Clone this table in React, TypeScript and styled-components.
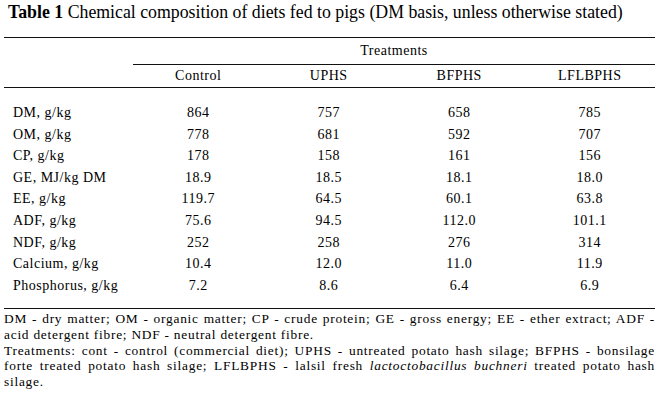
import React from "react";
import styled, { createGlobalStyle } from "styled-components";

const serif = `"Liberation Serif", "Times New Roman", Times, serif`;

const Global = createGlobalStyle`
  html, body { margin: 0; padding: 0; background: #fff; }
  body { font-family: ${serif}; color: #000; }
`;

const Page = styled.div`
  width: 651px;
  padding: 0 6px 0 4px;
  font-family: ${serif};
`;

const Title = styled.div`
  font-family: ${serif};
  font-size: 17.8px;
  line-height: 20px;
  padding: 2px 0 0 4px;
  margin-bottom: 15px;
  white-space: nowrap;
  b { font-weight: bold; }
`;

const Table = styled.table`
  width: 651px;
  border-collapse: separate;
  border-spacing: 0;
  table-layout: fixed;
  border-top: 1px solid #111;
  border-bottom: 1px solid #111;
  font-family: ${serif};
  font-size: 14px;
  letter-spacing: 0.5px;
  color: #000;
`;

const GroupHead = styled.th<{ $rule?: boolean }>`
  font-family: ${serif};
  font-weight: normal;
  text-align: center;
  line-height: 26px;
  padding: 0;
  border-bottom: ${(p) => (p.$rule ? "1px solid #111" : "none")};
`;

const ColHead = styled.th`
  font-family: ${serif};
  font-weight: normal;
  text-align: center;
  line-height: 22px;
  padding: 0;
  border-bottom: 1px solid #111;
`;

const Row = styled.tr`
  &:first-child td { padding-top: 14px; }
  &:last-child td { padding-bottom: 12px; }
`;

const Label = styled.td`
  font-family: ${serif};
  text-align: left;
  padding: 0 0 0 9px;
  line-height: 21.6px;
  white-space: nowrap;
`;

const Value = styled.td`
  font-family: ${serif};
  text-align: center;
  padding: 0;
  line-height: 21.6px;
`;

const Notes = styled.div`
  font-family: ${serif};
  font-size: 13.4px;
  letter-spacing: 0.75px;
  line-height: 15.6px;
  padding-top: 2px;
  text-align: justify;
  p { margin: 0; }
`;

const rows: [string, string, string, string, string][] = [
  ["DM, g/kg", "864", "757", "658", "785"],
  ["OM, g/kg", "778", "681", "592", "707"],
  ["CP, g/kg", "178", "158", "161", "156"],
  ["GE, MJ/kg DM", "18.9", "18.5", "18.1", "18.0"],
  ["EE, g/kg", "119.7", "64.5", "60.1", "63.8"],
  ["ADF, g/kg", "75.6", "94.5", "112.0", "101.1"],
  ["NDF, g/kg", "252", "258", "276", "314"],
  ["Calcium, g/kg", "10.4", "12.0", "11.0", "11.9"],
  ["Phosphorus, g/kg", "7.2", "8.6", "6.4", "6.9"],
];

export default function App() {
  return (
    <Page>
      <Global />
      <Title>
        <b>Table 1</b> Chemical composition of diets fed to pigs (DM basis, unless otherwise stated)
      </Title>
      <Table>
        <colgroup>
          <col style={{ width: 129 }} />
          <col style={{ width: 130.5 }} />
          <col style={{ width: 130.5 }} />
          <col style={{ width: 130.5 }} />
          <col style={{ width: 130.5 }} />
        </colgroup>
        <thead>
          <tr>
            <GroupHead />
            <GroupHead colSpan={4} $rule>
              Treatments
            </GroupHead>
          </tr>
          <tr>
            <ColHead />
            <ColHead>Control</ColHead>
            <ColHead>UPHS</ColHead>
            <ColHead>BFPHS</ColHead>
            <ColHead>LFLBPHS</ColHead>
          </tr>
        </thead>
        <tbody>
          {rows.map((r) => (
            <Row key={r[0]}>
              <Label>{r[0]}</Label>
              <Value>{r[1]}</Value>
              <Value>{r[2]}</Value>
              <Value>{r[3]}</Value>
              <Value>{r[4]}</Value>
            </Row>
          ))}
        </tbody>
      </Table>
      <Notes>
        <p>
          DM - dry matter; OM - organic matter; CP - crude protein; GE - gross energy; EE - ether extract; ADF - acid
          detergent fibre; NDF - neutral detergent fibre.
        </p>
        <p>
          Treatments: cont - control (commercial diet); UPHS - untreated potato hash silage; BFPHS - bonsilage forte
          treated potato hash silage; LFLBPHS - lalsil fresh <i>lactoctobacillus buchneri</i> treated potato hash
          silage.
        </p>
      </Notes>
    </Page>
  );
}
